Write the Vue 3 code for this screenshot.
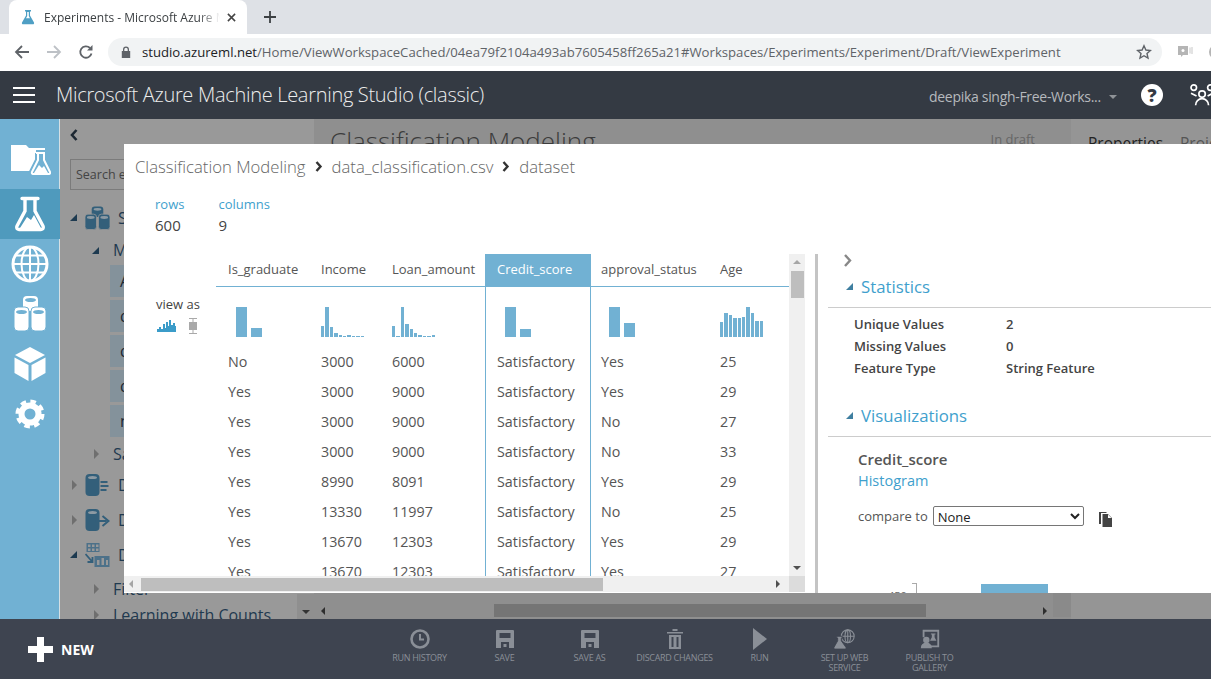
<template>
  <div class="page">
    <div class="tabstrip">
      <div class="tab">
        <svg class="favicon" viewBox="0 0 16 16"><path d="M5 1h6v1.500h-1v4l4 7c.4 1-.2 1.800-1 1.800H3c-.8 0-1.400-.8-1-1.800l4-7v-4H5z" fill="#4f9fc4" /><path d="M7.200 3h1.600v4l1.200 2.300H6L7.200 7z" fill="#fff" /></svg>
        <span class="tab-title">Experiments - Microsoft Azure M</span>
        <svg class="tab-close" viewBox="0 0 10 10"><path d="M1 1l8 8M9 1l-8 8" stroke="#444" stroke-width="1.700" /></svg>
      </div>
      <svg class="tab-new" viewBox="0 0 12 12"><path d="M6 0v12M0 6h12" stroke="#3c4043" stroke-width="1.800" /></svg>
    </div>

    <div class="toolbar">
      <svg class="nav-btn" viewBox="0 0 16 16"><path d="M15 8H2M8 2L2 8l6 6" fill="none" stroke="#5f6368" stroke-width="1.800" /></svg>
      <svg class="nav-btn" viewBox="0 0 16 16"><path d="M1 8h13M8 2l6 6-6 6" fill="none" stroke="#bdc1c6" stroke-width="1.800" /></svg>
      <svg class="nav-btn" viewBox="0 0 16 16"><path d="M13.500 9.500A5.700 5.700 0 1 1 12 4" fill="none" stroke="#5f6368" stroke-width="1.800" /><path d="M14.500 1v5.500H9z" fill="#5f6368" /></svg>
      <div class="omnibox">
        <svg class="lock" viewBox="0 0 10 12"><path d="M2 5V3.500a3 3 0 0 1 6 0V5h1.200v7H.8V5zm1.300 0h3.400V3.500a1.700 1.700 0 0 0-3.400 0z" fill="#5f6368" /></svg>
        <span class="url"><b>studio.azureml.net</b>/Home/ViewWorkspaceCached/04ea79f2104a493ab7605458ff265a21#Workspaces/Experiments/Experiment/Draft/ViewExperiment</span>
        <svg class="star" viewBox="0 0 16 16"><path d="M8 1.800l1.900 4.200 4.500.5-3.400 3 1 4.500L8 11.700 4 14l1-4.500-3.400-3 4.500-.5z" fill="none" stroke="#5f6368" stroke-width="1.400" /></svg>
      </div>
      <svg class="ext" viewBox="0 0 16 14"><path d="M1 1h10v9H6l-2 2v-2H1z" fill="#b5b5b5" /><path d="M12.500 2.500h1v6h-1zM14.500 2h1v7h-1z" fill="#c8c8c8" /><circle cx="6" cy="5.500" r="1.500" fill="#fff" /></svg>
      <span class="ext-cut"></span>
    </div>

    <header class="appbar">
      <div class="burger"><i></i><i></i><i></i></div>
      <div class="app-title">Microsoft Azure Machine Learning Studio (classic)</div>
      <div class="workspace">deepika singh-Free-Works...</div>
      <span class="caret"></span>
      <div class="help">?</div>
      <svg class="people" viewBox="0 0 30 26"><g fill="none" stroke="#fff" stroke-width="1.800"><circle cx="5" cy="5" r="3" /><circle cx="14" cy="12" r="3.500" /><circle cx="23" cy="5" r="3" /><path d="M2 11l6 3M26 11l-6 3M7 24c0-4 3-7 7-7s7 3 7 7" /></g></svg>
    </header>

    <main class="workspace-area">
      <nav class="side-nav">
        <a class="nav-item first">
          <svg viewBox="0 0 40 32" width="40" height="32"><path d="M0 1h15l3 3h16v23H0z" fill="#fff" /><path d="M25 9h9M27 9v7l-6 12c-.4 1 0 2 1 2h16c1 0 1.400-1 1-2l-6-12V9" fill="#71b1d3" stroke="#71b1d3" stroke-width="6" /><path d="M25 9h9M27 9v7l-6 12c-.4 1 0 2 1 2h16c1 0 1.400-1 1-2l-6-12V9" fill="#71b1d3" stroke="#fff" stroke-width="2" /><path d="M23 29l5-8 3 3 2-2 4 7z" fill="#fff" /></svg>
        </a>
        <a class="nav-item active">
          <svg viewBox="0 0 32 36" width="32" height="36"><path d="M8 2.500h16M11 3v12L3 30c-1 2 0 3.500 2 3.500h22c2 0 3-1.500 2-3.500L21 15V3" fill="none" stroke="#fff" stroke-width="3.400" stroke-linecap="round" /><path d="M6 32l7-11 4 3 3-5 7 13z" fill="#fff" /></svg>
        </a>
        <a class="nav-item">
          <svg viewBox="0 0 38 38" width="38" height="38"><g fill="none" stroke="#fff"><circle cx="19" cy="19" r="17" stroke-width="3" /><ellipse cx="19" cy="19" rx="8.500" ry="17" stroke-width="2" /><path d="M19 2v34M2 19h34M4.500 10.500h29M4.500 27.500h29" stroke-width="2" /></g></svg>
        </a>
        <a class="nav-item">
          <svg viewBox="0 0 33 36" width="33" height="36"><g fill="#fff"><rect x="9" y="0" width="15" height="15" rx="4" /><rect x="0" y="11" width="15" height="24" rx="4" stroke="#71b1d3" /><rect x="17" y="11" width="15" height="24" rx="4" stroke="#71b1d3" /></g><g fill="#71b1d3"><ellipse cx="16.500" cy="4" rx="5.500" ry="2" /><ellipse cx="7.500" cy="16" rx="5.500" ry="2" /><ellipse cx="24.500" cy="16" rx="5.500" ry="2" /></g></svg>
        </a>
        <a class="nav-item">
          <svg viewBox="0 0 34 36" width="34" height="36"><g fill="#fff"><path d="M17 1l15 8-15 8L2 9z" /><path d="M1.500 11.500L15.500 19v16L1.500 27z" /><path d="M32.500 11.500L18.500 19v16l14-8z" /></g></svg>
        </a>
        <a class="nav-item">
          <svg viewBox="0 0 30 30" width="30" height="30"><circle cx="15" cy="15" r="8.500" fill="none" stroke="#fff" stroke-width="6" /><circle cx="15" cy="15" r="12.500" fill="none" stroke="#fff" stroke-width="4" stroke-dasharray="5.500 4.320" /></svg>
        </a>
      </nav>

      <aside class="palette">
        <div class="collapse">
          <svg width="8" height="12" viewBox="0 0 8 12"><path d="M6.500 1L2 6l4.500 5" fill="none" stroke="#1d2833" stroke-width="2.600" /></svg>
        </div>
        <div class="search">Search experiment items</div>
        <ul class="tree">
          <li class="tree-row top">
            <span class="tri open"></span>
            <svg class="tree-icon" viewBox="0 0 26 24"><g fill="#335f7a"><rect x="7" y="0" width="12" height="11" rx="3" /><rect x="0" y="8" width="12" height="16" rx="3" stroke="#999" stroke-width=".8" /><rect x="14" y="8" width="12" height="16" rx="3" stroke="#999" stroke-width=".8" /></g><g fill="#8d9aa3"><ellipse cx="13" cy="3" rx="4" ry="1.500" /><ellipse cx="6" cy="11.500" rx="4" ry="1.500" /><ellipse cx="20" cy="11.500" rx="4" ry="1.500" /></g></svg>
            <span>Saved Datasets</span>
          </li>
          <li class="tree-row sub my">
            <span class="tri open"></span>
            <span>My Datasets</span>
          </li>
          <li v-for="chip in chips" :key="chip" class="chip">{{ chip }}</li>
          <li class="tree-row sub samples">
            <span class="tri closed"></span>
            <span>Samples</span>
          </li>
          <li class="tree-row top">
            <span class="tri closed"></span>
            <svg class="tree-icon" viewBox="0 0 24 24"><rect x="0" y="1" width="14" height="22" rx="4" fill="#335f7a" /><ellipse cx="7" cy="4.500" rx="4.500" ry="1.600" fill="#8d9aa3" /><path d="M15 8h7v2h-7zM15 12h8v2h-8zM15 16h6v2h-6z" fill="#335f7a" /></svg>
            <span>Data Format Conversions</span>
          </li>
          <li class="tree-row top">
            <span class="tri closed"></span>
            <svg class="tree-icon" viewBox="0 0 24 24"><rect x="0" y="1" width="14" height="22" rx="4" fill="#335f7a" /><ellipse cx="7" cy="4.500" rx="4.500" ry="1.600" fill="#8d9aa3" /><path d="M10 13h11M17 8l6 5-6 5" fill="none" stroke="#335f7a" stroke-width="2" /></svg>
            <span>Data Input and Output</span>
          </li>
          <li class="tree-row top">
            <span class="tri open"></span>
            <svg class="tree-icon" viewBox="0 0 24 24"><path d="M1 0h13v9H1zm1.500 1.500V4h2.500V1.500zm4 0V4h2.500V1.500zm4 0V4H13V1.500zm-8 4V8h2.500V5.500zm4 0V8h2.500V5.500zm4 0V8H13V5.500z" fill="#4d7189" fill-rule="evenodd" /><path d="M9 13h15v11H9zm2.500 9h2.500v-5h-2.500zm4.500 0h2.500v-7H16zm4.500 0h2v-5h-2z" fill="#4d7189" fill-rule="evenodd" /><path d="M0 11l7 8M2 19h5v-5" fill="none" stroke="#335f7a" stroke-width="1.800" /></svg>
            <span>Data Transformation</span>
          </li>
          <li class="tree-row sub">
            <span class="tri closed"></span>
            <span>Filter</span>
          </li>
          <li class="tree-row sub last">
            <span class="tri closed"></span>
            <span>Learning with Counts</span>
          </li>
        </ul>
        <div class="palette-scroll"><span class="tri-down"></span></div>
      </aside>

      <section class="canvas">
        <div class="canvas-head">
          <h2>Classification Modeling</h2>
          <span>In draft</span>
        </div>
        <div class="canvas-scroll">
          <span class="arrow-left"></span>
          <div class="canvas-thumb"></div>
          <span class="arrow-right"></span>
          <div class="canvas-corner"></div>
        </div>
      </section>

      <aside class="properties">
        <span class="prop-on">Properties</span>
        <span class="prop-off">Project</span>
      </aside>

      <div class="dialog">
        <div class="crumbs">
          <span>Classification Modeling</span>
          <svg width="8" height="11" viewBox="0 0 8 11"><path d="M1.500 1l4 4.500-4 4.500" fill="none" stroke="#333" stroke-width="2.400" /></svg>
          <span>data_classification.csv</span>
          <svg width="8" height="11" viewBox="0 0 8 11"><path d="M1.500 1l4 4.500-4 4.500" fill="none" stroke="#333" stroke-width="2.400" /></svg>
          <span>dataset</span>
        </div>
        <div class="counts">
          <div>
            <div class="count-label">rows</div>
            <div class="count-value">600</div>
          </div>
          <div>
            <div class="count-label">columns</div>
            <div class="count-value">9</div>
          </div>
        </div>

        <div class="dialog-body">
          <div class="data-pane">
            <div class="view-as">
              <div>view as</div>
              <div class="view-icons">
                <svg width="20" height="12" viewBox="0 0 20 12"><path d="M0 12V9h2V7h2v2h2V4h2v4h1V2h2v4h1V0h2v5h2V3h2v3h1v6z" fill="#3b9cc9" /></svg>
                <svg width="8" height="16" viewBox="0 0 8 16"><path d="M0 0h8v1H4.500v3H8v8H4.500v3H8v1H0v-1h3.500v-3H0V4h3.500V1H0z" fill="#a9a9a9" /></svg>
              </div>
            </div>
            <div class="table-wrap">
              <table>
                <colgroup>
                  <col v-for="w in colWidths" :key="w" :style="{ width: w + 'px' }" />
                </colgroup>
                <thead>
                  <tr>
                    <th v-for="(c, i) in columns" :key="c.name" :class="cellClass(i)">{{ c.name }}</th>
                  </tr>
                </thead>
                <tbody>
                  <tr class="hist-row">
                    <td v-for="(c, i) in columns" :key="c.name" :class="cellClass(i)">
                      <div class="hist" :class="{ wide: c.bars.length < 3 }">
                        <i v-for="(h, j) in c.bars" :key="j" :style="{ height: h + 'px' }"></i>
                      </div>
                    </td>
                  </tr>
                  <tr v-for="(row, r) in rows" :key="r">
                    <td v-for="(val, i) in row" :key="i" :class="cellClass(i)">{{ val }}</td>
                  </tr>
                </tbody>
              </table>
            </div>
            <div class="v-scroll">
              <span class="tri-up"></span>
              <div class="v-thumb"></div>
              <span class="tri-down dark"></span>
            </div>
            <div class="h-scroll">
              <span class="h-left"></span>
              <div class="h-thumb"></div>
              <span class="h-right"></span>
              <div class="h-corner"></div>
            </div>
          </div>

          <div class="divider"></div>

          <div class="side-pane">
            <div class="pane-chevron">
              <svg width="9" height="13" viewBox="0 0 9 13"><path d="M2 1l5 5.500L2 12" fill="none" stroke="#888" stroke-width="2.400" /></svg>
            </div>
            <div class="pane-head"><span class="corner"></span>Statistics</div>
            <dl class="stats">
              <template v-for="s in stats" :key="s.label">
                <dt>{{ s.label }}</dt>
                <dd>{{ s.value }}</dd>
              </template>
            </dl>
            <div class="pane-head viz"><span class="corner"></span>Visualizations</div>
            <div class="viz-body">
              <div class="viz-name">Credit_score</div>
              <div class="viz-type">Histogram</div>
              <div class="compare">
                <label>compare to</label>
                <select><option>None</option></select>
                <svg width="14" height="16" viewBox="0 0 14 16"><path d="M0 1h7l1 1H2v11H0z" fill="#444" /><path d="M3.500 3H9l4 4v9H3.500zM9 3.500V7h3.500z" fill="#444" /></svg>
              </div>
              <div class="chart">
                <div class="chart-label">450</div>
                <div class="chart-tick"></div>
                <div class="chart-bar"></div>
              </div>
            </div>
          </div>
        </div>
      </div>
    </main>

    <footer class="cmdbar">
      <button class="new-btn">
        <svg width="25" height="25" viewBox="0 0 25 25"><path d="M9 0h7v9h9v7h-9v9H9v-9H0V9h9z" fill="#fff" /></svg>
        NEW
      </button>
      <div class="actions">
        <div class="action">
          <svg viewBox="0 0 22 22"><circle cx="11" cy="11" r="8.500" fill="none" stroke="#8a8f97" stroke-width="2.600" /><path d="M11 6v5.500h4" fill="none" stroke="#8a8f97" stroke-width="2" /></svg>
          <span>RUN HISTORY</span>
        </div>
        <div class="action">
          <svg viewBox="0 0 22 22"><path d="M3 2h16c1 0 1 1 1 1v17H2V3s0-1 1-1zm2.500 3v5h11V5zM7 14v6h8v-6zm2.500 2h3v3h-3z" fill="#8a8f97" fill-rule="evenodd" /></svg>
          <span>SAVE</span>
        </div>
        <div class="action">
          <svg viewBox="0 0 22 22"><path d="M3 2h16c1 0 1 1 1 1v17H2V3s0-1 1-1zm2.500 3v5h11V5zM7 14v6h8v-6zm2.500 2h3v3h-3z" fill="#8a8f97" fill-rule="evenodd" /></svg>
          <span>SAVE AS</span>
        </div>
        <div class="action">
          <svg viewBox="0 0 22 22"><path d="M3 4h16v1.500H3zM8.500 1h5v2h-5zM5 7h12v14H5zm2.500 2v10h2V9zm5 0v10h2V9z" fill="#8a8f97" fill-rule="evenodd" /></svg>
          <span>DISCARD CHANGES</span>
        </div>
        <div class="action">
          <svg viewBox="0 0 22 22"><path d="M4 0l14 11L4 22z" fill="#8a8f97" /></svg>
          <span>RUN</span>
        </div>
        <div class="action">
          <svg viewBox="0 0 24 22"><g fill="none" stroke="#8a8f97" stroke-width="1.200"><circle cx="15" cy="8" r="7" /><ellipse cx="15" cy="8" rx="3" ry="7" /><path d="M15 1v14M8 8h14" /></g><path d="M3 8h6v2H8v3l5 7c.5 1 0 2-1 2H1c-1 0-1.500-1-1-2l4-7v-3H3z" fill="#8a8f97" stroke="#3e4450" /></svg>
          <span>SET UP WEB<br />SERVICE</span>
        </div>
        <div class="action">
          <svg viewBox="0 0 24 22"><path d="M4 1h18v19H10v-2h10V3H6v6H4z" fill="#8a8f97" /><circle cx="8" cy="12" r="3.500" fill="#8a8f97" /><path d="M2 21c0-4 2-6 6-6s6 2 6 6z" fill="#8a8f97" /><path d="M13 5h5v1h-1v3l2 4h-7l2-4V6h-1z" fill="#8a8f97" /></svg>
          <span>PUBLISH TO<br />GALLERY</span>
        </div>
      </div>
    </footer>
  </div>
</template>

<script setup>
const chips = ["Adult Census", "data_classification.csv", "data_clean.csv", "data_final.csv", "new_data.csv"];

const colWidths = [93, 71, 105, 106, 117, 81];
const selected = 3;

const columns = [
  { name: "Is_graduate", bars: [30, 9] },
  { name: "Income", bars: [11, 30, 10, 4, 2, 1, 2, 1, 1, 1] },
  { name: "Loan_amount", bars: [11, 1, 30, 13, 8, 4, 2, 1, 1, 2] },
  { name: "Credit_score", bars: [30, 8] },
  { name: "approval_status", bars: [30, 14] },
  { name: "Age", bars: [15, 24, 22, 19, 19, 20, 30, 24, 16, 16] },
];

const rows = [
  ["No", "3000", "6000", "Satisfactory", "Yes", "25"],
  ["Yes", "3000", "9000", "Satisfactory", "Yes", "29"],
  ["Yes", "3000", "9000", "Satisfactory", "No", "27"],
  ["Yes", "3000", "9000", "Satisfactory", "No", "33"],
  ["Yes", "8990", "8091", "Satisfactory", "Yes", "29"],
  ["Yes", "13330", "11997", "Satisfactory", "No", "25"],
  ["Yes", "13670", "12303", "Satisfactory", "Yes", "29"],
  ["Yes", "13670", "12303", "Satisfactory", "Yes", "27"],
];

const stats = [
  { label: "Unique Values", value: "2" },
  { label: "Missing Values", value: "0" },
  { label: "Feature Type", value: "String Feature" },
];

const cellClass = (i) => ({ picked: i === selected, tight: i === 4 });
</script>

<style>
html,
body {
  margin: 0;
  overflow: hidden;
  background: #fff;
}
</style>

<style scoped>
.page {
  width: 1211px;
  height: 681px;
  display: flex;
  flex-direction: column;
  overflow: hidden;
  font-family: "Open Sans", "Noto Sans", sans-serif;
  color: #555;
}

/* browser chrome */
.tabstrip {
  height: 34px;
  background: #dee1e6;
  display: flex;
  align-items: flex-end;
  padding-left: 9px;
}

.tab {
  width: 238px;
  height: 34px;
  background: #fff;
  border-radius: 8px 8px 0 0;
  display: flex;
  align-items: center;
  padding: 0 9px 0 11px;
  box-sizing: border-box;
}

.favicon {
  width: 16px;
  height: 16px;
}

.tab-title {
  margin-left: 8px;
  width: 176px;
  white-space: nowrap;
  overflow: hidden;
  font-size: 12px;
  color: #3c4043;
  -webkit-mask-image: linear-gradient(90deg, #000 88%, transparent);
  mask-image: linear-gradient(90deg, #000 88%, transparent);
}

.tab-close {
  width: 9px;
  height: 9px;
  margin-left: 7px;
}

.tab-new {
  width: 12px;
  height: 12px;
  margin: 0 0 11px 17px;
}

.toolbar {
  height: 37px;
  padding: 0 0 2px 14px;
  box-sizing: border-box;
  background: #fff;
  display: flex;
  align-items: center;
  overflow: hidden;
}

.nav-btn {
  width: 16px;
  height: 16px;
  margin-right: 16px;
  flex: none;
}

.omnibox {
  width: 1054px;
  height: 28px;
  margin-left: -2px;
  background: #f1f3f4;
  border-radius: 14px;
  display: flex;
  align-items: center;
  padding-left: 13px;
  box-sizing: border-box;
  flex: none;
}

.lock {
  width: 10px;
  height: 12px;
  flex: none;
}

.url {
  margin-left: 11px;
  width: 994px;
  font-size: 13.150px;
  color: #5f6368;
  white-space: nowrap;
  flex: none;
}

.url b {
  font-weight: 400;
  color: #202124;
}

.star {
  width: 16px;
  height: 16px;
  flex: none;
}

.ext {
  width: 16px;
  height: 14px;
  margin-left: 15px;
  flex: none;
}

.ext-cut {
  width: 14px;
  height: 14px;
  margin-left: 16px;
  border-radius: 50%;
  background: #b5b5b5;
  flex: none;
}

/* app header */
.appbar {
  height: 48px;
  background: #343a43;
  display: flex;
  align-items: center;
  overflow: hidden;
}

.burger {
  width: 22px;
  margin-left: 13px;
  display: flex;
  flex-direction: column;
  gap: 5px;
  flex: none;
}

.burger i {
  display: block;
  height: 2px;
  background: #fff;
}

.app-title {
  margin: -2px 0 0 21px;
  width: 873px;
  font-size: 20px;
  font-weight: 300;
  letter-spacing: -0.3px;
  color: #eceded;
  white-space: nowrap;
  flex: none;
}

.workspace {
  width: 176px;
  padding-top: 3px;
  font-size: 14px;
  letter-spacing: -0.3px;
  color: #b6b9bd;
  white-space: nowrap;
  flex: none;
}

.caret {
  width: 0;
  height: 0;
  border: 4px solid transparent;
  border-top-color: #8f9398;
  border-bottom: 0;
  margin: 3px 0 0 4px;
  flex: none;
}

.help {
  width: 22px;
  height: 22px;
  margin-left: 24px;
  border-radius: 50%;
  background: #fff;
  color: #343a43;
  font-size: 18px;
  font-weight: 800;
  line-height: 22px;
  text-align: center;
  flex: none;
}

.people {
  width: 28px;
  height: 24px;
  margin-left: 26px;
  flex: none;
}

/* dimmed workspace */
.workspace-area {
  position: relative;
  height: 500px;
  display: flex;
  overflow: hidden;
}

.side-nav {
  width: 60px;
  padding-top: 20px;
  background: #71b1d3;
  box-shadow: inset -1px 0 0 #d4dfe4;
  flex: none;
}

.nav-item {
  height: 50px;
  display: flex;
  align-items: center;
  justify-content: center;
}

.nav-item.first {
  padding: 0 0 8px 1px;
  box-sizing: border-box;
}

.nav-item.active {
  background: #4f9abd;
}

.palette {
  position: relative;
  width: 254px;
  background: #999;
  flex: none;
  padding-left: 10px;
  box-sizing: border-box;
}

.collapse {
  height: 40px;
  padding-top: 10px;
  box-sizing: border-box;
}

.collapse svg {
  display: block;
}

.search {
  width: 230px;
  height: 31px;
  border: 1px solid #7b7b7b;
  box-sizing: border-box;
  line-height: 30px;
  padding-left: 5px;
  font-size: 12.500px;
  color: #444;
  white-space: nowrap;
}

.tree {
  list-style: none;
  margin: 10px 0 0;
  padding: 0;
  font-size: 16px;
  color: #1f3a50;
}

.tree-row {
  display: flex;
  align-items: center;
  height: 35px;
  white-space: nowrap;
}

.tree-row.sub {
  height: 33px;
  padding-left: 22px;
}

.tree-row.top span:last-child {
  margin-left: 8px;
}

.tree-row.sub span:last-child {
  margin-left: 14px;
}

.tree-row.my {
  height: 30px;
}

.tree-row.samples {
  height: 27px;
}

.tree-row.last {
  height: 20px;
}

.tree-icon {
  width: 25px;
  height: 24px;
  margin-left: 8px;
  flex: none;
}

.tri {
  display: block;
  width: 0;
  height: 0;
  flex: none;
}

.tri.closed {
  margin-left: 2px;
  border-left: 5px solid #6f6f6f;
  border-top: 5px solid transparent;
  border-bottom: 5px solid transparent;
}

.tri.open {
  border-right: 7px solid #1d3a50;
  border-top: 7px solid transparent;
}

.chip {
  height: 32px;
  margin: 0 0 3px 40px;
  padding-left: 10px;
  background: #84929b;
  line-height: 32px;
  color: #1d2833;
}

.palette-scroll {
  position: absolute;
  right: 0;
  bottom: 0;
  width: 17px;
  height: 25px;
  background: #8f8f8f;
}

.tri-down {
  display: block;
  width: 0;
  height: 0;
  margin: 16px auto 0;
  border: 4px solid transparent;
  border-top-color: #333;
  border-bottom: 0;
}

.canvas {
  width: 757px;
  background: #8f8f8f;
  display: flex;
  flex-direction: column;
  flex: none;
}

.canvas-head {
  flex: 1;
  display: flex;
  justify-content: space-between;
  padding: 4px 36px 0 16px;
  color: #444;
}

.canvas-head h2 {
  margin: 0;
  font-size: 26px;
  font-weight: 300;
  line-height: 36px;
  color: #3c3c3c;
}

.canvas-head span {
  font-size: 13px;
  color: #666;
  line-height: 32px;
}

.canvas-scroll {
  height: 13px;
  margin-bottom: 2px;
  display: flex;
  align-items: center;
}

.arrow-left,
.arrow-right {
  width: 0;
  height: 0;
  border-top: 4px solid transparent;
  border-bottom: 4px solid transparent;
}

.arrow-left {
  margin-left: 7px;
  border-right: 4px solid #2e2e2e;
}

.arrow-right {
  margin-left: 117px;
  border-left: 4px solid #2e2e2e;
}

.canvas-thumb {
  width: 432px;
  height: 13px;
  margin-left: 169px;
  background: #757575;
}

.canvas-corner {
  width: 18px;
  height: 25px;
  margin: -12px 0 0 auto;
  background: #8a8a8a;
}

.properties {
  flex: 1;
  background: #959595;
  padding: 13px 0 0 17px;
  font-size: 15.500px;
  white-space: nowrap;
  display: flex;
  gap: 17px;
  overflow: hidden;
}

.prop-on {
  color: #222;
}

.prop-off {
  color: #555;
}

/* dataset dialog */
.dialog {
  position: absolute;
  top: 25px;
  left: 124px;
  right: 0;
  height: 449px;
  background: #fff;
  display: flex;
  flex-direction: column;
}

.crumbs {
  height: 46px;
  padding: 0 0 2px 11px;
  box-sizing: border-box;
  display: flex;
  align-items: center;
  font-size: 16.700px;
  font-weight: 300;
  color: #666;
  gap: 9px;
}

.counts {
  display: flex;
  gap: 34px;
  height: 64px;
  padding-left: 31px;
}

.count-label {
  font-size: 13px;
  color: #3f9fcd;
  line-height: 22px;
  margin-top: 3px;
}

.count-value {
  font-size: 15px;
  color: #444;
  line-height: 22px;
  margin-top: -1px;
}

.dialog-body {
  flex: 1;
  display: flex;
  min-height: 0;
}

.data-pane {
  width: 681px;
  flex: none;
  display: grid;
  grid-template-columns: 92px 573px 16px;
  grid-template-rows: 322px 16px;
  align-content: start;
}

.view-as {
  padding: 41px 0 0 32px;
  font-size: 13px;
  color: #444;
  line-height: 18px;
}

.view-icons {
  display: flex;
  align-items: center;
  gap: 12px;
  margin: 5px 0 0 1px;
}

.table-wrap {
  overflow: hidden;
}

table {
  width: 573px;
  table-layout: fixed;
  border-collapse: separate;
  border-spacing: 0;
  font-size: 14.300px;
  color: #555;
}

th,
td {
  padding: 0 0 2px 12px;
  font-weight: 400;
  text-align: left;
  white-space: nowrap;
  box-sizing: border-box;
}

th {
  height: 33px;
  font-size: 13px;
  border-bottom: 1px solid #71b1d3;
}

td {
  height: 30px;
}

th.tight,
td.tight {
  padding-left: 10px;
}

td.picked {
  border-left: 1px solid #71b1d3;
  border-right: 1px solid #71b1d3;
  padding-left: 11px;
}

th.picked {
  background: #71b1d3;
  color: #fff;
}

.hist-row td {
  height: 60px;
  vertical-align: top;
  padding-top: 20px;
  padding-bottom: 0;
}

.hist {
  display: flex;
  align-items: flex-end;
  height: 30px;
  gap: 1px;
}

.hist i {
  display: block;
  width: 3.400px;
  background: #71b1d3;
}

.hist.wide {
  gap: 4px;
  padding-left: 8px;
}

.hist.wide i {
  width: 11px;
}

.v-scroll {
  background: #f0f0f0;
  display: flex;
  flex-direction: column;
  align-items: center;
}

.tri-up {
  width: 0;
  height: 0;
  margin-top: 6px;
  border: 4px solid transparent;
  border-bottom-color: #a6a6a6;
  border-top: 0;
}

.v-thumb {
  width: 13px;
  height: 27px;
  margin-top: 7px;
  background: #bebebe;
}

.tri-down.dark {
  margin: auto auto 6px;
  border-top-color: #505050;
}

.h-scroll {
  grid-column: 1 / 4;
  background: #f0f0f0;
  display: flex;
  align-items: center;
}

.h-left,
.h-right {
  width: 0;
  height: 0;
  border-top: 4px solid transparent;
  border-bottom: 4px solid transparent;
}

.h-left {
  margin-left: 5px;
  border-right: 4px solid #a6a6a6;
}

.h-thumb {
  width: 462px;
  height: 13px;
  margin-left: 8px;
  background: #bebebe;
}

.h-right {
  margin-left: 173px;
  border-left: 4px solid #505050;
}

.h-corner {
  width: 16px;
  height: 16px;
  margin-left: auto;
  background: #dcdcdc;
}

.divider {
  width: 3px;
  height: 339px;
  margin-left: 10px;
  background: #c4c4c4;
  flex: none;
}

.side-pane {
  flex: 1;
  margin-left: 10px;
  min-width: 0;
  overflow: hidden;
}

.pane-chevron {
  height: 16px;
  padding-left: 15px;
}

.pane-chevron svg {
  display: block;
}

.pane-head {
  height: 38px;
  padding: 0 0 4px 18px;
  border-bottom: 1px solid #ccc;
  box-sizing: border-box;
  display: flex;
  align-items: center;
  gap: 8px;
  font-size: 16.800px;
  color: #3f9fcd;
}

.pane-head.viz {
  margin-top: 20px;
}

.corner {
  width: 0;
  height: 0;
  border-right: 7px solid #3f7fa0;
  border-top: 7px solid transparent;
}

.stats {
  display: grid;
  grid-template-columns: 152px 1fr;
  grid-auto-rows: 22px;
  margin: 5px 0 0 26px;
  align-items: center;
  font-size: 13px;
  font-weight: 600;
  color: #444;
}

.stats dt,
.stats dd {
  margin: 0;
}

.viz-body {
  padding: 11px 0 0 30px;
}

.viz-name {
  font-size: 15px;
  font-weight: 600;
  color: #555;
  line-height: 22px;
}

.viz-type {
  font-size: 14.500px;
  color: #3f9fcd;
  line-height: 22px;
}

.compare {
  display: flex;
  align-items: center;
  margin-top: 13px;
  font-size: 13px;
}

.compare select {
  width: 151px;
  height: 20px;
  margin-left: 5px;
  font-family: "Open Sans", sans-serif;
  font-size: 13px;
  color: #222;
  background: #fff;
  border: 1px solid #767676;
  border-radius: 2px;
}

.compare svg {
  margin: 6px 0 0 15px;
}

.chart {
  position: relative;
  margin-top: 56px;
  height: 12px;
  overflow: hidden;
}

.chart-label {
  position: absolute;
  left: 30px;
  top: 6px;
  font-size: 11px;
  line-height: 14px;
  color: #666;
}

.chart-tick {
  position: absolute;
  left: 54px;
  top: 0;
  width: 5px;
  height: 12px;
  border-top: 1px solid #aaa;
  border-right: 1px solid #aaa;
  box-sizing: border-box;
}

.chart-bar {
  position: absolute;
  left: 123px;
  top: 1px;
  width: 67px;
  height: 12px;
  background: #71b1d3;
}

/* bottom command bar */
.cmdbar {
  height: 60px;
  background: #3e4450;
  display: flex;
  align-items: center;
}

.new-btn {
  display: flex;
  align-items: center;
  gap: 8px;
  margin-left: 28px;
  width: 349px;
  padding: 0;
  border: 0;
  background: none;
  font-family: inherit;
  font-size: 14px;
  font-weight: 700;
  color: #fff;
}

.actions {
  display: flex;
}

.action {
  width: 85px;
  height: 48px;
  padding-top: 3px;
  box-sizing: border-box;
  display: flex;
  flex-direction: column;
  align-items: center;
  font-size: 9px;
  line-height: 10px;
  letter-spacing: -0.3px;
  text-align: center;
  color: #8a8f97;
  white-space: nowrap;
  overflow: visible;
}

.action svg {
  width: 22px;
  height: 22px;
  margin-bottom: 3px;
  flex: none;
}
</style>
